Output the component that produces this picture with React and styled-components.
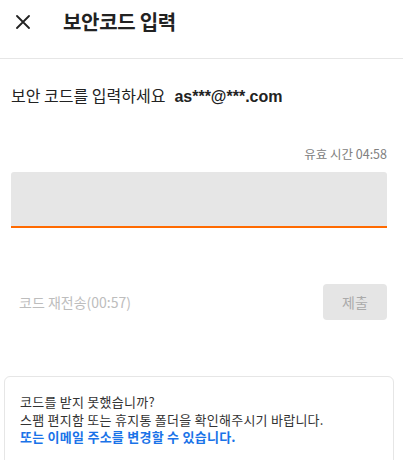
import React from 'react';
import styled, { createGlobalStyle } from 'styled-components';

const GlobalStyle = createGlobalStyle`
  body {
    margin: 0;
    background: #fff;
    font-family: "Liberation Sans", "Noto Sans CJK KR", sans-serif;
    color: #222;
  }
`;

const Page = styled.div`
  width: 403px;
  height: 460px;
  overflow: hidden;
  display: flex;
  flex-direction: column;
`;

const Header = styled.header`
  height: 59px;
  display: flex;
  align-items: center;
  padding: 0 0 15px 15px;
  border-bottom: 1px solid #e6e6e6;
  box-sizing: border-box;
  flex-shrink: 0;
`;

const CloseButton = styled.button`
  width: 16px;
  height: 16px;
  padding: 0;
  border: none;
  background: none;
  display: flex;
  align-items: center;
  justify-content: center;
  cursor: pointer;
`;

const Title = styled.h1`
  margin: 0 0 0 32px;
  font-size: 20px;
  font-weight: 700;
  color: #222;
  font-family: "Noto Sans CJK KR", sans-serif;
  letter-spacing: -0.3px;
`;

const Body = styled.main`
  padding: 0 16px 0 11px;
  display: flex;
  flex-direction: column;
`;

const Prompt = styled.p`
  margin: 26px 0 0;
  font-size: 16px;
  line-height: 20px;
  color: #222;
  font-family: "Noto Sans CJK KR", sans-serif;
`;

const Email = styled.span`
  font-family: "Liberation Sans", sans-serif;
  font-weight: 700;
  margin-left: 9px;
`;

const Timer = styled.div`
  margin-top: 39px;
  align-self: flex-end;
  font-size: 12.5px;
  line-height: 16px;
  color: #808080;
  font-family: "Noto Sans CJK KR", sans-serif;
`;

const CodeInput = styled.input`
  margin-top: 10px;
  height: 56px;
  box-sizing: border-box;
  border: none;
  border-bottom: 2px solid #ff6a00;
  border-radius: 3px 3px 0 0;
  background: #e6e6e6;
  outline: none;
  padding: 0 12px;
  font-size: 16px;
`;

const Actions = styled.div`
  margin-top: 56px;
  display: flex;
  align-items: center;
  justify-content: space-between;
`;

const Resend = styled.span`
  margin-left: 8px;
  font-size: 14px;
  color: #bdbdbd;
  font-family: "Noto Sans CJK KR", sans-serif;
`;

const Submit = styled.button`
  width: 64px;
  height: 36px;
  border: none;
  border-radius: 4px;
  background: #e5e5e5;
  color: #aaa;
  font-size: 14px;
  font-family: "Noto Sans CJK KR", sans-serif;
`;

const InfoBox = styled.section`
  margin: 56px 9px 0 4px;
  border: 1px solid #e6e6e6;
  border-radius: 6px;
  padding: 16px 15px 20px;
  font-family: "Noto Sans CJK KR", sans-serif;
  font-size: 13px;
  line-height: 17.5px;
  letter-spacing: 0.25px;
  color: #333;
`;

const InfoLine = styled.div`
  color: ${p => (p.$link ? '#1a73e8' : '#333')};
  font-weight: ${p => (p.$link ? 700 : 400)};
`;

export default function App() {
  return (
    <>
      <GlobalStyle />
      <Page>
        <Header>
          <CloseButton aria-label="닫기">
            <svg width="14" height="14" viewBox="0 0 14 14">
              <path d="M1 1L13 13M13 1L1 13" stroke="#222" strokeWidth="1.8" strokeLinecap="round" />
            </svg>
          </CloseButton>
          <Title>보안코드 입력</Title>
        </Header>
        <Body>
          <Prompt>
            보안 코드를 입력하세요<Email>as***@***.com</Email>
          </Prompt>
          <Timer>유효 시간 04:58</Timer>
          <CodeInput />
          <Actions>
            <Resend>코드 재전송(00:57)</Resend>
            <Submit>제출</Submit>
          </Actions>
        </Body>
        <InfoBox>
          <InfoLine>코드를 받지 못했습니까?</InfoLine>
          <InfoLine>스팸 편지함 또는 휴지통 폴더을 확인해주시기 바랍니다.</InfoLine>
          <InfoLine $link>또는 이메일 주소를 변경할 수 있습니다.</InfoLine>
        </InfoBox>
      </Page>
    </>
  );
}
